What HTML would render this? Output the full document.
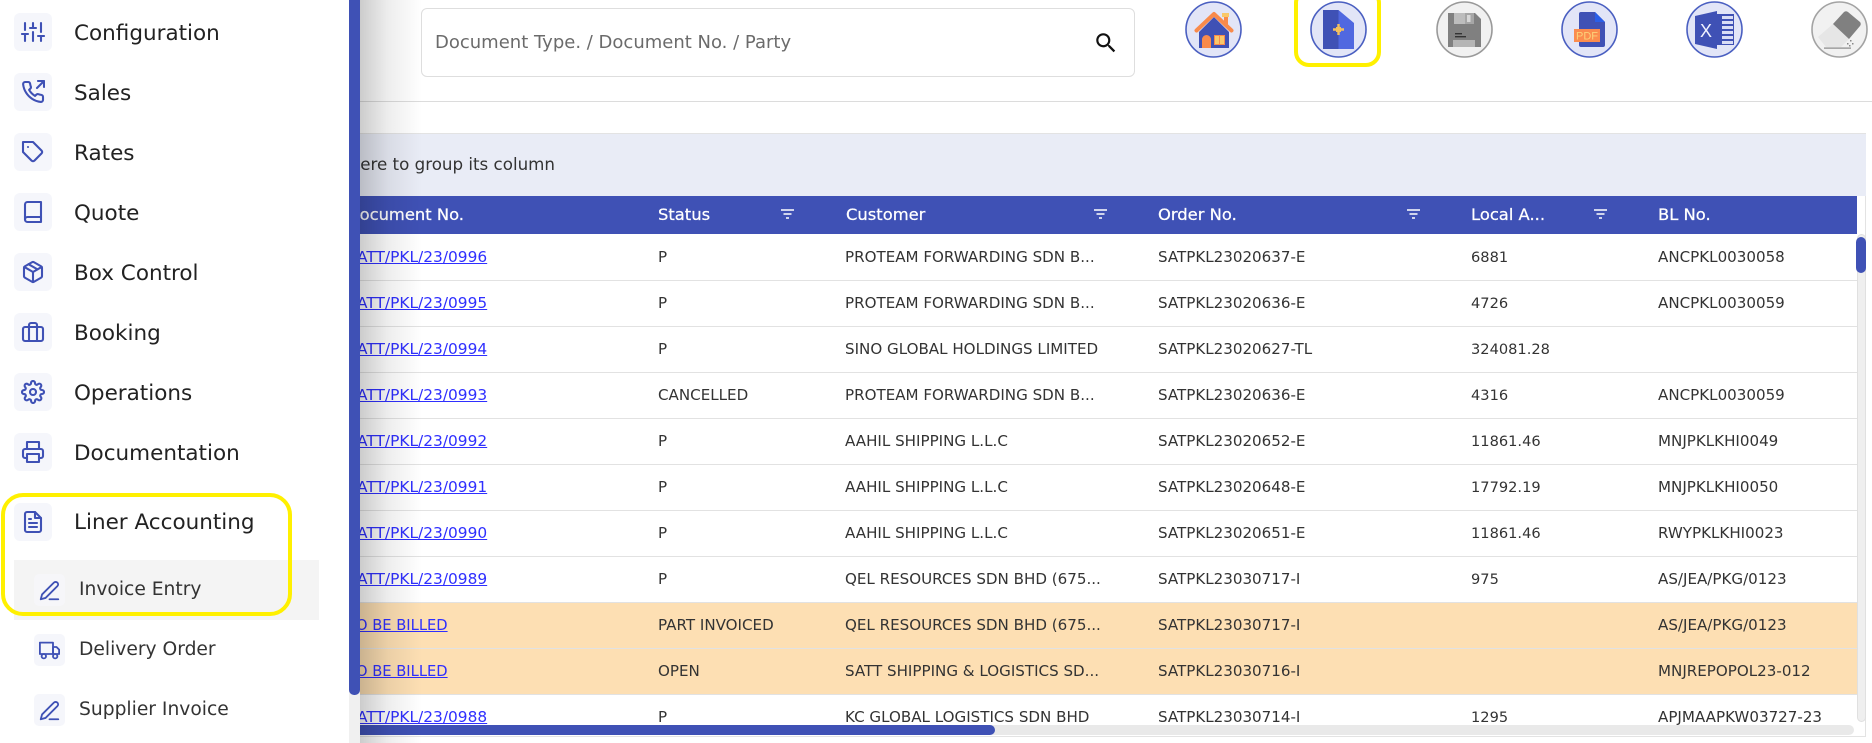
<!DOCTYPE html>
<html lang="en"><head><meta charset="utf-8"><title>Invoice Entry</title>
<style>
html,body{margin:0;padding:0;width:1872px;height:743px;overflow:hidden;background:#fff;font-family:"DejaVu Sans","Liberation Sans",sans-serif;color:#333}
.abs{position:absolute}
#side{position:absolute;left:0;top:0;width:349px;height:743px;background:#fff;z-index:5}
.ib{position:absolute;left:14px;width:38px;height:38px;border-radius:6px;background:#f5f6fb}
.ib svg{position:absolute;left:7px;top:7px}
.sb{position:absolute;left:34px;width:31px;height:32px;border-radius:5px;background:#f5f6fb}
.sb svg{position:absolute;left:5px;top:6px}
svg.f{fill:none;stroke:#3f51b5;stroke-width:2.1;stroke-linecap:round;stroke-linejoin:round}
.lb{position:absolute;left:74px;font-size:21.5px;line-height:28px;color:#222;white-space:nowrap}
.sl{position:absolute;left:79px;font-size:18.7px;line-height:26px;color:#333;white-space:nowrap}
#tb{position:absolute;left:347px;top:235px;width:1510px;height:490px;overflow:hidden}
table{border-collapse:collapse;table-layout:fixed;width:1510px;font-size:15.1px;color:#333}
td{height:43px;padding:0 0 2px 0;border-bottom:1px solid #e2e2e2;white-space:nowrap;overflow:hidden}
a{color:#2f2fff;text-decoration:underline;font-size:15.4px}
a.t{font-size:14.7px}
td.n{font-size:14.6px;height:45px;padding:0}
.o td{background:#fddfb3}
.h{position:absolute;top:197px;height:37px;line-height:36px;color:#fff;font-size:16.35px;white-space:nowrap;-webkit-text-stroke:.25px #fff}
.fl{position:absolute;top:209px}
.c{position:absolute;top:1px}
</style></head><body>

<div class="abs" style="left:421px;top:8px;width:712px;height:67px;border:1px solid #dedede;border-radius:6px"></div>
<div class="abs" style="left:435px;top:30px;font-size:18px;line-height:26px;color:#6b6b6b;white-space:nowrap">Document Type. / Document No. / Party</div>
<svg class="abs" style="left:1093px;top:30px" width="26" height="26" viewBox="0 0 24 24"><path fill="#111" d="M15.5 14h-.79l-.28-.27A6.47 6.47 0 0 0 16 9.5 6.5 6.5 0 1 0 9.5 16c1.61 0 3.09-.59 4.23-1.57l.27.28v.79l5 4.99L20.49 19l-4.99-5zm-6 0C7.01 14 5 11.99 5 9.5S7.01 5 9.5 5 14 7.01 14 9.5 11.99 14 9.5 14z"/></svg>

<svg class="c" style="left:1185px" width="57" height="57" viewBox="0 0 57 57"><circle cx="28.5" cy="28.5" r="27.5" fill="#e2e5f7" stroke="#4a5fc1" stroke-width="1.6"/><rect x="39" y="14" width="4" height="10" fill="#f98a4b"/><rect x="37" y="12" width="7" height="4" fill="#f9c86b"/><path d="M14 31 29 16 44 31V47H14z" fill="#3f51b5"/><path d="M11.500 29.500 29 13 46.500 29.500" fill="none" stroke="#f98a4b" stroke-width="4" stroke-linecap="round" stroke-linejoin="round"/><path d="M17 47V38.500a4.500 4.500 0 0 1 9 0V47z" fill="#f98a4b"/><rect x="29" y="34" width="11" height="10" fill="#f98a4b"/><rect x="30" y="35" width="4" height="8" fill="#f9c86b"/><rect x="35" y="35" width="4" height="8" fill="#f9c86b"/></svg>

<svg class="c" style="left:1310px" width="57" height="57" viewBox="0 0 57 57"><circle cx="28.5" cy="28.500" r="27.500" fill="#e2e5f7" stroke="#4a5fc1" stroke-width="1.6"/><rect x="13" y="9" width="15.500" height="39" fill="#3f51b5"/><path d="M28.500 9 44 22V48H28.500z" fill="#5068e0"/><path d="M23 28.500H34M28.500 23V34" stroke="#f5c15c" stroke-width="2.400"/><rect x="26" y="26" width="5" height="5" fill="#f5c15c"/></svg>
<div class="abs" style="left:1294px;top:-12px;width:79px;height:71px;border:4px solid #fff000;border-radius:15px"></div>

<svg class="c" style="left:1436px" width="57" height="57" viewBox="0 0 57 57"><circle cx="28.500" cy="28.500" r="27.500" fill="#f1f1f1" stroke="#999" stroke-width="1.600"/><path d="M12 12H39L45 18V46H12z" fill="#808080"/><path d="M18 12H33L38 23H18z" fill="#bdbdbd"/><path d="M29 12H38V23H29z" fill="#a6a6a6"/><rect x="31" y="14" width="3.500" height="7" fill="#d8d8d8"/><rect x="17" y="39" width="22" height="7" fill="#b5b5b5"/><rect x="19" y="32" width="7" height="1.400" fill="#333"/><rect x="19" y="35" width="11" height="1.400" fill="#333"/></svg>

<svg class="c" style="left:1561px" width="57" height="57" viewBox="0 0 57 57"><circle cx="28.500" cy="28.500" r="27.500" fill="#e2e5f7" stroke="#4a5fc1" stroke-width="1.600"/><path d="M20 11H34L44 21V44a2 2 0 0 1-2 2H20a2 2 0 0 1-2-2V13a2 2 0 0 1 2-2z" fill="#3f51b5"/><path d="M34 11 44 21H34z" fill="#2a5ee8"/><rect x="13" y="28" width="26" height="13" fill="#fb8c4e"/><text x="26" y="38.500" text-anchor="middle" font-family="Liberation Sans,sans-serif" font-size="11" fill="#fbd27a">PDF</text></svg>

<svg class="c" style="left:1686px" width="57" height="57" viewBox="0 0 57 57"><circle cx="28.500" cy="28.500" r="27.500" fill="#e2e5f7" stroke="#4a5fc1" stroke-width="1.600"/><rect x="31" y="13" width="17" height="31" fill="#3f51b5"/><g fill="#d9ddf5"><rect x="36" y="15" width="11" height="3"/><rect x="36" y="20" width="11" height="3"/><rect x="36" y="25" width="11" height="3"/><rect x="36" y="30" width="11" height="3"/><rect x="36" y="35" width="11" height="3"/><rect x="36" y="40" width="11" height="3"/></g><path d="M9 15 31 10V48L9 43z" fill="#3f51b5"/><text x="20" y="36" text-anchor="middle" font-family="Liberation Sans,sans-serif" font-size="18" fill="#f0f2ff">X</text></svg>

<svg class="c" style="left:1811px" width="57" height="57" viewBox="0 0 57 57"><circle cx="28.500" cy="28.500" r="27.500" fill="#f1f1f1" stroke="#a3a3a3" stroke-width="1.600"/><path d="M22 23 38 38 30 46H15L7 36z" fill="#e6e6e6"/><path d="M22 23 33 11a3 3 0 0 1 4 0L49 21a3 3 0 0 1 0 4L38 38z" fill="#808080"/><rect x="13" y="46.500" width="27" height="1.200" fill="#888"/><g fill="#888"><rect x="39" y="39" width="1.500" height="1.500"/><rect x="36" y="42" width="1.500" height="1.500"/><rect x="41" y="42" width="1.500" height="1.500"/><rect x="38" y="44" width="1.500" height="1.500"/></g></svg>

<div class="abs" style="left:349px;top:101px;width:1523px;height:1px;background:#dcdcdc"></div>

<div class="abs" style="left:340px;top:133px;width:1526px;height:604px;border:1px solid #e3e3e3;border-left:0;box-sizing:border-box"></div>
<div class="abs" style="left:340px;top:133px;width:1526px;height:63px;background:#e9ecf6;border-top:1px solid #e3e3e3;box-sizing:border-box"></div>
<div class="abs" style="left:100px;width:455px;top:151px;text-align:right;font-size:16.7px;line-height:26px;color:#333;white-space:nowrap">Drag a column header here to group its column</div>

<div class="abs" style="left:340px;top:196px;width:1517px;height:38px;background:#3f51b5"></div>
<div class="h" style="left:347px">Document No.</div>
<div class="h" style="left:658px">Status</div>
<div class="h" style="left:846px">Customer</div>
<div class="h" style="left:1158px">Order No.</div>
<div class="h" style="left:1471px">Local A...</div>
<div class="h" style="left:1658px">BL No.</div>
<svg class="fl" style="left:781px" width="13" height="10"><path d="M0 1H13M2.500 5H10.500M5 9H8" stroke="#fff" stroke-width="1.600"/></svg>
<svg class="fl" style="left:1094px" width="13" height="10"><path d="M0 1H13M2.500 5H10.500M5 9H8" stroke="#fff" stroke-width="1.600"/></svg>
<svg class="fl" style="left:1407px" width="13" height="10"><path d="M0 1H13M2.500 5H10.500M5 9H8" stroke="#fff" stroke-width="1.600"/></svg>
<svg class="fl" style="left:1594px" width="13" height="10"><path d="M0 1H13M2.500 5H10.500M5 9H8" stroke="#fff" stroke-width="1.600"/></svg>

<div id="tb"><table>
<colgroup><col style="width:311px"><col style="width:187px"><col style="width:313px"><col style="width:313px"><col style="width:187px"><col style="width:199px"></colgroup>
<tr><td><a>SATT/PKL/23/0996</a></td><td>P</td><td>PROTEAM FORWARDING SDN B...</td><td>SATPKL23020637-E</td><td class="n">6881</td><td>ANCPKL0030058</td></tr>
<tr><td><a>SATT/PKL/23/0995</a></td><td>P</td><td>PROTEAM FORWARDING SDN B...</td><td>SATPKL23020636-E</td><td class="n">4726</td><td>ANCPKL0030059</td></tr>
<tr><td><a>SATT/PKL/23/0994</a></td><td>P</td><td>SINO GLOBAL HOLDINGS LIMITED</td><td>SATPKL23020627-TL</td><td class="n">324081.28</td><td></td></tr>
<tr><td><a>SATT/PKL/23/0993</a></td><td>CANCELLED</td><td>PROTEAM FORWARDING SDN B...</td><td>SATPKL23020636-E</td><td class="n">4316</td><td>ANCPKL0030059</td></tr>
<tr><td><a>SATT/PKL/23/0992</a></td><td>P</td><td>AAHIL SHIPPING L.L.C</td><td>SATPKL23020652-E</td><td class="n">11861.46</td><td>MNJPKLKHI0049</td></tr>
<tr><td><a>SATT/PKL/23/0991</a></td><td>P</td><td>AAHIL SHIPPING L.L.C</td><td>SATPKL23020648-E</td><td class="n">17792.19</td><td>MNJPKLKHI0050</td></tr>
<tr><td><a>SATT/PKL/23/0990</a></td><td>P</td><td>AAHIL SHIPPING L.L.C</td><td>SATPKL23020651-E</td><td class="n">11861.46</td><td>RWYPKLKHI0023</td></tr>
<tr><td><a>SATT/PKL/23/0989</a></td><td>P</td><td>QEL RESOURCES SDN BHD (675...</td><td>SATPKL23030717-I</td><td class="n">975</td><td>AS/JEA/PKG/0123</td></tr>
<tr class="o"><td><a class="t">TO BE BILLED</a></td><td>PART INVOICED</td><td>QEL RESOURCES SDN BHD (675...</td><td>SATPKL23030717-I</td><td></td><td>AS/JEA/PKG/0123</td></tr>
<tr class="o"><td><a class="t">TO BE BILLED</a></td><td>OPEN</td><td>SATT SHIPPING &amp; LOGISTICS SD...</td><td>SATPKL23030716-I</td><td></td><td>MNJREPOPOL23-012</td></tr>
<tr><td><a>SATT/PKL/23/0988</a></td><td>P</td><td>KC GLOBAL LOGISTICS SDN BHD</td><td>SATPKL23030714-I</td><td class="n">1295</td><td>APJMAAPKW03727-23</td></tr>
</table></div>

<div class="abs" style="left:1857px;top:234px;width:9px;height:488px;background:#efefef;border-radius:5px;border:1px solid #e0e0e0;box-sizing:border-box"></div>
<div class="abs" style="left:1856px;top:237px;width:10px;height:36px;background:#3f51b5;border-radius:5px"></div>
<div class="abs" style="left:349px;top:725px;width:1505px;height:10px;background:#e9e9e9;border-radius:5px"></div>
<div class="abs" style="left:349px;top:725px;width:646px;height:10px;background:#3f51b5;border-radius:5px"></div>

<div class="abs" style="left:360px;top:0;width:62px;height:743px;background:linear-gradient(90deg,rgba(0,0,0,.2),rgba(0,0,0,.07) 45%,rgba(0,0,0,0));z-index:4"></div>

<div id="side">
<div class="ib" style="top:13px"><svg class="f" width="24" height="24" viewBox="0 0 24 24"><path d="M4 21V14M4 10V3M12 21V12M12 8V3M20 21V16M20 12V3M1 14H7M9 8H15M17 16H23"/></svg></div>
<div class="lb" style="top:20px">Configuration</div>
<div class="ib" style="top:73px"><svg class="f" width="24" height="24" viewBox="0 0 24 24"><path d="M23 7V1H17M16 8 23 1"/><path d="M22 16.920v3a2 2 0 0 1-2.180 2 19.790 19.790 0 0 1-8.630-3.070 19.500 19.500 0 0 1-6-6 19.790 19.790 0 0 1-3.070-8.670A2 2 0 0 1 4.110 2h3a2 2 0 0 1 2 1.720 12.840 12.840 0 0 0 .7 2.810 2 2 0 0 1-.45 2.110L8.090 9.910a16 16 0 0 0 6 6l1.270-1.270a2 2 0 0 1 2.110-.45 12.840 12.840 0 0 0 2.810.7A2 2 0 0 1 22 16.920z"/></svg></div>
<div class="lb" style="top:80px">Sales</div>
<div class="ib" style="top:133px"><svg class="f" width="24" height="24" viewBox="0 0 24 24"><path d="M20.590 13.410l-7.170 7.170a2 2 0 0 1-2.830 0L2 12V2h10l8.590 8.590a2 2 0 0 1 0 2.820z"/><path d="M7 7h.01"/></svg></div>
<div class="lb" style="top:140px">Rates</div>
<div class="ib" style="top:193px"><svg class="f" width="24" height="24" viewBox="0 0 24 24"><path d="M4 19.500A2.500 2.500 0 0 1 6.500 17H20"/><path d="M6.500 2H20v20H6.500A2.500 2.500 0 0 1 4 19.500v-15A2.500 2.500 0 0 1 6.500 2z"/></svg></div>
<div class="lb" style="top:200px">Quote</div>
<div class="ib" style="top:253px"><svg class="f" width="24" height="24" viewBox="0 0 24 24"><path d="M16.500 9.400 7.500 4.210"/><path d="M21 16V8a2 2 0 0 0-1-1.730l-7-4a2 2 0 0 0-2 0l-7 4A2 2 0 0 0 3 8v8a2 2 0 0 0 1 1.730l7 4a2 2 0 0 0 2 0l7-4A2 2 0 0 0 21 16z"/><path d="M3.270 6.960 12 12.010l8.730-5.050M12 22.080V12"/></svg></div>
<div class="lb" style="top:260px">Box Control</div>
<div class="ib" style="top:313px"><svg class="f" width="24" height="24" viewBox="0 0 24 24"><rect x="2" y="7" width="20" height="14" rx="2"/><path d="M16 21V5a2 2 0 0 0-2-2h-4a2 2 0 0 0-2 2v16"/></svg></div>
<div class="lb" style="top:320px">Booking</div>
<div class="ib" style="top:373px"><svg class="f" width="24" height="24" viewBox="0 0 24 24"><circle cx="12" cy="12" r="3"/><path d="M19.400 15a1.650 1.650 0 0 0 .33 1.820l.06.06a2 2 0 0 1 0 2.830 2 2 0 0 1-2.830 0l-.06-.06a1.650 1.650 0 0 0-1.820-.33 1.650 1.650 0 0 0-1 1.510V21a2 2 0 0 1-2 2 2 2 0 0 1-2-2v-.09A1.650 1.650 0 0 0 9 19.400a1.650 1.650 0 0 0-1.820.33l-.06.06a2 2 0 0 1-2.830 0 2 2 0 0 1 0-2.830l.06-.06a1.650 1.650 0 0 0 .33-1.820 1.650 1.650 0 0 0-1.510-1H3a2 2 0 0 1-2-2 2 2 0 0 1 2-2h.09A1.650 1.650 0 0 0 4.600 9a1.650 1.650 0 0 0-.33-1.820l-.06-.06a2 2 0 0 1 0-2.830 2 2 0 0 1 2.830 0l.06.06a1.650 1.650 0 0 0 1.820.33H9a1.650 1.650 0 0 0 1-1.510V3a2 2 0 0 1 2-2 2 2 0 0 1 2 2v.09a1.650 1.650 0 0 0 1 1.510 1.650 1.650 0 0 0 1.820-.33l.06-.06a2 2 0 0 1 2.830 0 2 2 0 0 1 0 2.830l-.06.06a1.650 1.650 0 0 0-.33 1.820V9a1.650 1.650 0 0 0 1.510 1H21a2 2 0 0 1 2 2 2 2 0 0 1-2 2h-.09a1.650 1.650 0 0 0-1.510 1z"/></svg></div>
<div class="lb" style="top:380px">Operations</div>
<div class="ib" style="top:433px"><svg class="f" width="24" height="24" viewBox="0 0 24 24"><path d="M6 9V2H18V9"/><path d="M6 18H4a2 2 0 0 1-2-2v-5a2 2 0 0 1 2-2h16a2 2 0 0 1 2 2v5a2 2 0 0 1-2 2h-2"/><rect x="6" y="14" width="12" height="8"/></svg></div>
<div class="lb" style="top:440px">Documentation</div>
<div class="ib" style="top:503px"><svg class="f" width="24" height="24" viewBox="0 0 24 24"><path d="M14 2H6a2 2 0 0 0-2 2v16a2 2 0 0 0 2 2h12a2 2 0 0 0 2-2V8z"/><path d="M14 2V8H20M16 13H8M16 17H8M10 9H8"/></svg></div>
<div class="lb" style="top:509px">Liner Accounting</div>
<div class="abs" style="left:14px;top:560px;width:305px;height:60px;background:#f4f4f4"></div>
<div class="sb" style="top:574px;background:#f6f6f9"><svg class="f" width="21" height="21" viewBox="0 0 24 24"><path d="M17 3a2.828 2.828 0 1 1 4 4L7.500 20.500 2 22l1.500-5.500L17 3z"/><path d="M12 22H22"/></svg></div>
<div class="sl" style="top:577px">Invoice Entry</div>
<div class="sb" style="top:634px"><svg class="f" width="21" height="21" viewBox="0 0 24 24"><rect x="1" y="3" width="15" height="13"/><path d="M16 8H20L23 11V16H16z"/><circle cx="5.500" cy="18.500" r="2.500"/><circle cx="18.500" cy="18.500" r="2.500"/></svg></div>
<div class="sl" style="top:637px">Delivery Order</div>
<div class="sb" style="top:694px"><svg class="f" width="21" height="21" viewBox="0 0 24 24"><path d="M17 3a2.828 2.828 0 1 1 4 4L7.500 20.500 2 22l1.500-5.500L17 3z"/><path d="M12 22H22"/></svg></div>
<div class="sl" style="top:697px">Supplier Invoice</div>
<div class="abs" style="left:1px;top:493px;width:291px;height:123px;border:4px solid #fff000;border-radius:22px;box-sizing:border-box"></div>
</div>

<div class="abs" style="left:349px;top:0;width:11px;height:743px;background:#f0f0f0;z-index:6"></div>
<div class="abs" style="left:349px;top:0;width:11px;height:695px;background:#3f51b5;border-radius:0 0 5px 5px;z-index:7"></div>
</body></html>
